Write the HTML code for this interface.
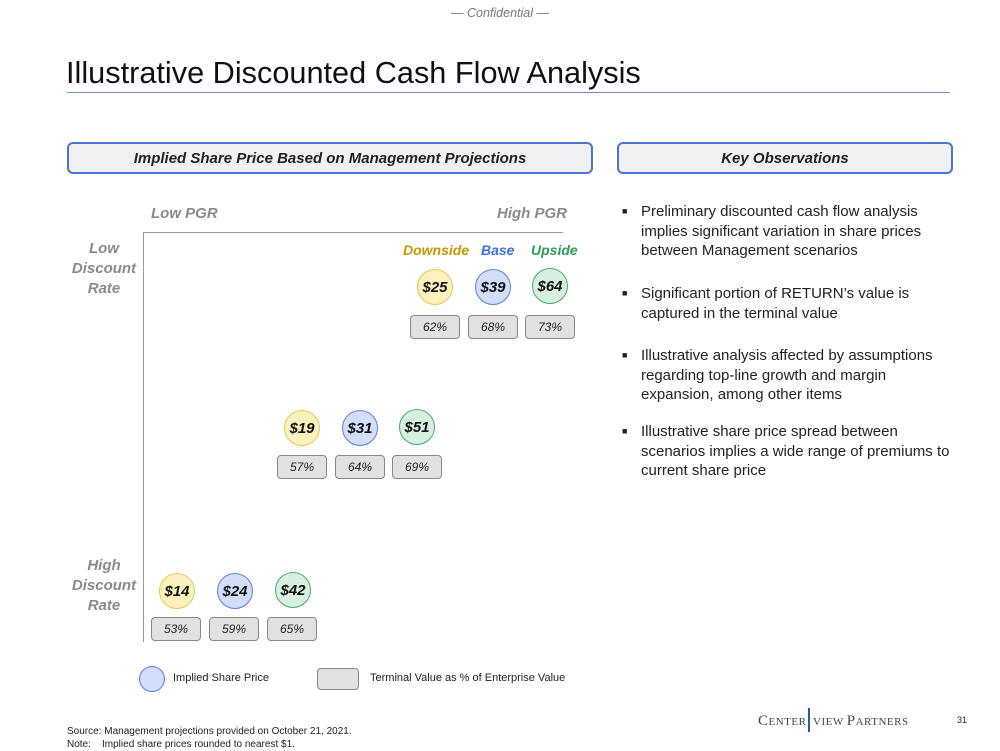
<!DOCTYPE html>
<html><head><style>
body{margin:0;width:1000px;height:750px;background:#fff;font-family:"Liberation Sans",sans-serif;position:relative;overflow:hidden}
.a{position:absolute}
.hdr{position:absolute;height:32px;border:2px solid #4a74d8;border-radius:6px;background:#f1f1f3;box-sizing:border-box;text-align:center;line-height:29px;font-weight:bold;font-style:italic;font-size:15px;color:#222}
.c{position:absolute;width:36px;height:36px;border-radius:50%;box-sizing:border-box;text-align:center;line-height:35px;font-weight:bold;font-style:italic;font-size:15px;color:#111}
.y{background:#fdf1bf;border:1px solid #e6c84a}
.b{background:#d3defb;border:1px solid #5b7fe0}
.g{background:#d7efdf;border:1px solid #4caa70}
.p{position:absolute;width:50px;height:24px;border:1px solid #888;border-radius:4px;background:#e1e1e1;box-sizing:border-box;text-align:center;line-height:22px;font-style:italic;font-size:12px;color:#222}
.lab{position:absolute;color:#8a8a8a;font-weight:bold;font-style:italic;font-size:15px;text-align:center;line-height:20px}
.bl{position:absolute;left:622px;font-size:15px;color:#222;line-height:19.5px}
.bl span{position:absolute;left:0;font-size:9px}
.bl div{margin-left:19px;width:310px}
</style></head><body>
<div class="a" style="left:0;width:1000px;top:6px;text-align:center;font-style:italic;font-size:12.5px;color:#777">— Confidential —</div>
<div class="a" style="left:66px;top:55px;font-size:30.7px;color:#111">Illustrative Discounted Cash Flow Analysis</div>
<div class="a" style="left:67px;top:92px;width:883px;height:1px;background:#6d93b8"></div>
<div class="hdr" style="left:67px;top:142px;width:526px">Implied Share Price Based on Management Projections</div>
<div class="hdr" style="left:617px;top:142px;width:336px">Key Observations</div>
<div class="lab" style="left:151px;top:204px">Low PGR</div>
<div class="lab" style="left:497px;top:204px">High PGR</div>
<div class="lab" style="left:62px;top:239px;width:84px">Low<br>Discount<br>Rate</div>
<div class="lab" style="left:62px;top:556px;width:84px">High<br>Discount<br>Rate</div>
<div class="a" style="left:143px;top:232px;width:1px;height:410px;background:#999"></div>
<div class="a" style="left:143px;top:232px;width:420px;height:1px;background:#999"></div>
<div class="a" style="left:403px;top:242px;font-weight:bold;font-style:italic;font-size:14px;color:#c49a00">Downside</div>
<div class="a" style="left:481px;top:242px;font-weight:bold;font-style:italic;font-size:14px;color:#3f6fdc">Base</div>
<div class="a" style="left:531px;top:242px;font-weight:bold;font-style:italic;font-size:14px;color:#2f9a5a">Upside</div>
<div class="c y" style="left:417px;top:269px">$25</div>
<div class="c b" style="left:475px;top:269px">$39</div>
<div class="c g" style="left:532px;top:268px">$64</div>
<div class="p" style="left:410px;top:315px">62%</div>
<div class="p" style="left:468px;top:315px">68%</div>
<div class="p" style="left:525px;top:315px">73%</div>
<div class="c y" style="left:284px;top:410px">$19</div>
<div class="c b" style="left:342px;top:410px">$31</div>
<div class="c g" style="left:399px;top:409px">$51</div>
<div class="p" style="left:277px;top:455px">57%</div>
<div class="p" style="left:335px;top:455px">64%</div>
<div class="p" style="left:392px;top:455px">69%</div>
<div class="c y" style="left:159px;top:573px">$14</div>
<div class="c b" style="left:217px;top:573px">$24</div>
<div class="c g" style="left:275px;top:572px">$42</div>
<div class="p" style="left:151px;top:617px">53%</div>
<div class="p" style="left:209px;top:617px">59%</div>
<div class="p" style="left:267px;top:617px">65%</div>
<div class="a" style="left:139px;top:666px;width:26px;height:26px;border-radius:50%;background:#d3defb;border:1px solid #5b7fe0;box-sizing:border-box"></div>
<div class="a" style="left:173px;top:672px;font-size:11px;color:#222">Implied Share Price</div>
<div class="a" style="left:317px;top:668px;width:42px;height:22px;background:#e1e1e1;border:1px solid #888;border-radius:4px;box-sizing:border-box"></div>
<div class="a" style="left:370px;top:672px;font-size:11px;color:#222">Terminal Value as % of Enterprise Value</div>
<div class="bl" style="top:202px"><span>■</span><div>Preliminary discounted cash flow analysis implies significant variation in share prices between Management scenarios</div></div>
<div class="bl" style="top:284px"><span>■</span><div>Significant portion of RETURN’s value is captured in the terminal value</div></div>
<div class="bl" style="top:346px"><span>■</span><div>Illustrative analysis affected by assumptions regarding top-line growth and margin expansion, among other items</div></div>
<div class="bl" style="top:422px"><span>■</span><div>Illustrative share price spread between scenarios implies a wide range of premiums to current share price</div></div>
<div class="a" style="left:67px;top:725px;font-size:10px;color:#222;line-height:13px">Source: Management projections provided on October 21, 2021.<br>Note:&nbsp;&nbsp;&nbsp; Implied share prices rounded to nearest $1.</div>
<div class="a" style="left:758px;top:713px;font-family:'Liberation Serif',serif;font-size:15px;color:#444;letter-spacing:0.5px">C<span style="font-size:11px">ENTER</span></div>
<div class="a" style="left:808px;top:708px;width:2px;height:24px;background:#2c5aa0"></div>
<div class="a" style="left:813px;top:713px;font-family:'Liberation Serif',serif;font-size:11px;color:#444;letter-spacing:0.5px">VIEW <span style="font-size:15px">P</span>ARTNERS</div>
<div class="a" style="left:957px;top:715px;font-size:9px;color:#222">31</div>
</body></html>
